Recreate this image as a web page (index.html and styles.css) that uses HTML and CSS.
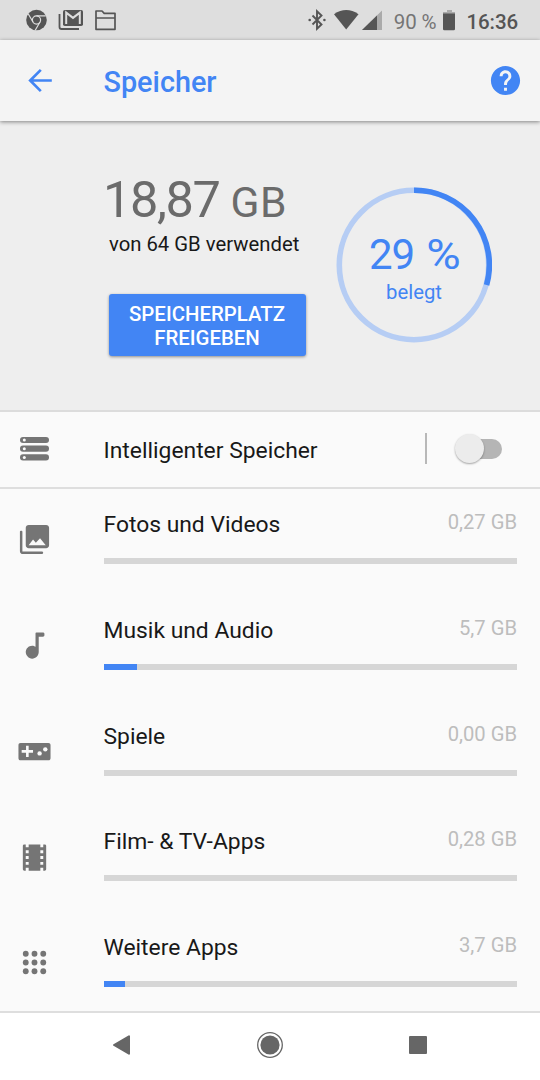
FILE: index.html
```html
<!DOCTYPE html>
<html lang="de">
<head>
<meta charset="utf-8">
<title>Speicher</title>
<link rel="stylesheet" href="styles.css">
</head>
<body>
<div class="screen">
  <div class="status">
    <svg class="status-icons" width="540" height="40" viewBox="0 0 540 40">
      <circle cx="36.500" cy="20" r="10.300" fill="#555"/>
      <g fill="none" stroke="#dedede" stroke-width="1.200"><circle cx="36.500" cy="20" r="4.100"/><path d="M36.500 15.900h9.300M33 22l-4.700-8M40 22l-4.800 8.300"/></g>
      <path d="M59.500 14v13q0 2 2 2h17.500" fill="none" stroke="#555" stroke-width="1.800"/>
      <rect x="63" y="10" width="20" height="16" rx="1.800" fill="#555"/>
      <path d="M66.200 24V12.600l6.800 5.300 6.800-5.300V24" fill="none" stroke="#dedede" stroke-width="2"/>
      <path d="M96 11h6l2.200 2.300H115V29.300H96zM96 18h19" fill="none" stroke="#555" stroke-width="1.700" stroke-linejoin="round"/>
      <path d="M312.500 15.500l9 9-4.500 4.300V11.200l4.500 4.300-9 9" fill="none" stroke="#555" stroke-width="1.900"/>
      <circle cx="309.700" cy="20" r="1.300" fill="#555"/><circle cx="324.400" cy="20" r="1.300" fill="#555"/>
      <path d="M334 14.200Q346.200 5.800 358.500 14.200L346.200 29.500z" fill="#555"/>
      <path d="M382 10.500V30H362z" fill="#aaa"/><path d="M377 15.400V30h-15z" fill="#555"/>
      <path d="M447 10h5v2h3v3h-12v-3h4z" fill="#aaa"/><path d="M443 13.500h12V29q0 1.300-1.300 1.300h-9.400Q443 30.300 443 29z" fill="#555"/>
    </svg>
    <span class="battery">90 %</span>
    <span class="clock">16:36</span>
  </div>
  <header class="bar">
    <svg class="back" width="35" height="35" viewBox="0 0 35 35"><path d="M29.800 17.500H8M18.800 6.900L8.200 17.500l10.600 10.600" fill="none" stroke="#4285f4" stroke-width="2.700"/></svg>
    <h1 class="title">Speicher</h1>
    <svg class="help" width="35" height="35" viewBox="0 0 24 24"><path fill="#4285f4" d="M12 2C6.480 2 2 6.480 2 12s4.480 10 10 10 10-4.480 10-10S17.520 2 12 2zm1 17h-2v-2h2v2zm2.070-7.750l-.9.920C13.450 12.900 13 13.500 13 15h-2v-.5c0-1.100.45-2.100 1.170-2.830l1.240-1.260c.37-.36.59-.86.59-1.410 0-1.100-.9-2-2-2s-2 .9-2 2H8c0-2.210 1.790-4 4-4s4 1.790 4 4c0 .88-.36 1.680-.93 2.250z"/></svg>
  </header>
  <section class="summary">
    <div class="usage">
      <div class="amount"><span class="number">18,87</span><span class="unit">GB</span></div>
      <div class="total">von 64 GB verwendet</div>
      <button class="free">SPEICHERPLATZ<br>FREIGEBEN</button>
    </div>
    <div class="donut">
      <svg class="ring" width="156" height="156" viewBox="0 0 156 156" fill="none" stroke-width="5.600">
        <circle cx="78" cy="78" r="74.700" stroke="#b6cdf4"/>
        <path d="M78 3.300A74.700 74.700 0 0 1 150.600 98.100" stroke="#4285f4"/>
      </svg>
      <div class="percent"><span class="percent-number">29</span><span class="percent-sign">%</span></div>
      <div class="used">belegt</div>
    </div>
  </section>
  <section class="smart">
    <svg class="icon" width="35" height="35" viewBox="0 0 35 35"><g fill="#757575"><rect x="3" y="5.900" width="29" height="6.200" rx="3"/><rect x="3" y="14.600" width="29" height="6.200" rx="3"/><rect x="3" y="23.300" width="29" height="6.200" rx="3"/></g><g fill="#fafafa"><circle cx="7.300" cy="9" r="1.500"/><circle cx="7.300" cy="17.700" r="1.500"/><circle cx="7.300" cy="26.400" r="1.500"/></g></svg>
    <span class="smart-label">Intelligenter Speicher</span>
    <span class="divider"></span>
    <span class="switch"><span class="thumb"></span></span>
  </section>
  <main class="list">
    <div class="row">
      <svg class="icon" width="35" height="35" viewBox="0 0 24 24"><path fill="#757575" d="M22 16V4c0-1.100-.9-2-2-2H8c-1.100 0-2 .9-2 2v12c0 1.100.9 2 2 2h12c1.100 0 2-.9 2-2zM8 16l3-4 1.900 2.300L15.800 11.100l3.900 4.900zM2 6.600V20c0 1.100.9 2 2 2h13.300c.9 0 .9-1.700 0-1.700H3.700V6.600c0-.9-1.700-.9-1.700 0z"/></svg>
      <div class="body"><div class="line"><span class="name">Fotos und Videos</span><span class="size">0,27 GB</span></div><div class="track"></div></div>
    </div>
    <div class="row">
      <svg class="icon" width="35" height="35" viewBox="0 0 24 24"><path fill="#757575" d="M12.700 3.600v9.300C12 12.500 11.300 12.100 10.400 12.100c-2.500 0-4.400 2-4.400 4.400S8 21 10.400 21s4.500-2 4.500-4.500V6h2.900c.6 0 1-.4 1-1V4c0-.6-.4-1-1-1h-4.500c-.4 0-.6.3-.6.6z"/></svg>
      <div class="body"><div class="line"><span class="name">Musik und Audio</span><span class="size">5,7 GB</span></div><div class="track"><div class="fill" style="width:8.1%"></div></div></div>
    </div>
    <div class="row">
      <svg class="icon" width="35" height="35" viewBox="0 0 24 24"><path fill="#757575" d="M21.500 6.100h-19C1.500 6.100 1 6.700 1 7.700v8.700c0 1 .5 1.600 1.500 1.600h19c1 0 1.500-.6 1.500-1.600V7.700c0-1-.5-1.600-1.500-1.600zM11 12.800H8V15.800H6.200v-3H3.200V11h3V8H8v3h3z"/><g fill="#fafafa"><circle cx="15.500" cy="13.300" r="1.500"/><circle cx="19.400" cy="10.500" r="1.500"/></g></svg>
      <div class="body"><div class="line"><span class="name">Spiele</span><span class="size">0,00 GB</span></div><div class="track"></div></div>
    </div>
    <div class="row">
      <svg class="icon" width="35" height="35" viewBox="0 0 24 24"><path fill="#757575" d="M18 3v2h-2V3H8v2H6V3H5q-1 0-1 1v16q0 1 1 1h1v-2h2v2h8v-2h2v2h1q1 0 1-1V4q0-1-1-1zM8 17H6v-2h2v2zm0-4H6v-2h2v2zm0-4H6V7h2v2zm10 8h-2v-2h2v2zm0-4h-2v-2h2v2zm0-4h-2V7h2v2z"/></svg>
      <div class="body"><div class="line"><span class="name">Film- &amp; TV-Apps</span><span class="size">0,28 GB</span></div><div class="track"></div></div>
    </div>
    <div class="row">
      <svg class="icon" width="35" height="35" viewBox="0 0 24 24"><g fill="#757575"><circle cx="6" cy="6" r="2"/><circle cx="12" cy="6" r="2"/><circle cx="18" cy="6" r="2"/><circle cx="6" cy="12" r="2"/><circle cx="12" cy="12" r="2"/><circle cx="18" cy="12" r="2"/><circle cx="6" cy="18" r="2"/><circle cx="12" cy="18" r="2"/><circle cx="18" cy="18" r="2"/></g></svg>
      <div class="body"><div class="line"><span class="name">Weitere Apps</span><span class="size">3,7 GB</span></div><div class="track"><div class="fill" style="width:5.2%"></div></div></div>
    </div>
  </main>
  <nav class="nav">
    <svg width="30" height="30" viewBox="0 0 30 30"><path d="M7 15L22 6.300v17.400z" fill="#666" stroke="#666" stroke-width="2" stroke-linejoin="round"/></svg>
    <svg width="30" height="30" viewBox="0 0 30 30"><circle cx="15" cy="15" r="12.300" fill="none" stroke="#666" stroke-width="1.300"/><circle cx="15" cy="15" r="9.600" fill="#666"/></svg>
    <svg width="30" height="30" viewBox="0 0 30 30"><rect x="6" y="6" width="18" height="18" rx="1" fill="#666"/></svg>
  </nav>
</div>
</body>
</html>
```
FILE: styles.css
```css
* { box-sizing: border-box; }
body { margin: 0; font-family: Roboto, "Liberation Sans", sans-serif; color: #181818; }
.screen { width: 540px; height: 1080px; display: flex; flex-direction: column; background: #fafafa; overflow: hidden; }
.status { height: 40px; background: #dedede; position: relative; display: flex; justify-content: flex-end; align-items: center; padding: 3px 22px 0 0; gap: 30px; font-size: 20.5px; line-height: 24px; flex: none; }
.status-icons { position: absolute; left: 0; top: 0; }
.battery { color: #757575; letter-spacing: -.1px; }
.clock { color: #555; font-weight: 500; letter-spacing: -.1px; }
.bar { height: 81px; flex: none; display: flex; align-items: center; padding: 0 17px 0 22px; background: #f4f4f4; box-shadow: 0 1px 4px rgba(0,0,0,.45); z-index: 1; }
.title { flex: 1; margin: 2px 0 0 46.5px; font-size: 28.800px; line-height: 34px; font-weight: 500; color: #4285f4; }
.summary { height: 291px; flex: none; background: #eee; border-bottom: 2px solid #dcdcdc; display: flex; padding: 49px 48px 0 103px; justify-content: space-between; }
.amount { display: flex; align-items: baseline; color: #6b6b6b; height: 59px; line-height: 59px; }
.number { font-size: 50.500px; letter-spacing: -1.4px; }
.unit { font-size: 42.500px; margin-left: 11px; letter-spacing: .5px; }
.total { margin: 2px 0 0 6px; font-size: 20.3px; line-height: 26px; }
.free { display: block; margin: 37px 0 0 5.5px; width: 197px; height: 62px; padding: 2px 0 0; border: 0; border-radius: 3px; background: #4285f4; color: #fff; font: 500 20.4px/24px Roboto, sans-serif; box-shadow: 0 1px 3px rgba(0,0,0,.4); }
.donut { width: 156px; height: 156px; margin-top: 17px; position: relative; color: #4285f4; text-align: center; padding-top: 47px; }
.ring { position: absolute; left: 0; top: 0; }
.percent { font-size: 42px; line-height: 42px; display: flex; justify-content: center; gap: 14px; }
.percent-number { letter-spacing: -1px; }
.percent-sign { transform: scaleX(1.12); }
.used { font-size: 20.3px; line-height: 24px; margin-top: 4px; }
.smart { height: 77px; flex: none; display: flex; align-items: center; padding: 0 38px 2px 17px; border-bottom: 2px solid #dedede; }
.icon { flex: none; }
.smart-label { flex: 1; margin: 4px 0 0 51.5px; font-size: 22.850px; }
.divider { width: 2px; height: 31px; background: #b8b8b8; margin-right: 30px; }
.switch { width: 45px; height: 20px; border-radius: 10px; background: #b5b5b5; }
.thumb { display: block; width: 29px; height: 29px; margin: -4.5px 0 0 -2px; border-radius: 50%; background: #ececec; box-shadow: 0 1px 2px rgba(0,0,0,.35); }
.list { height: 522px; flex: none; overflow: hidden; }
.row { height: 105.75px; display: flex; padding: 0 23px 0 17px; }
.row .icon { margin-top: 33.3px; }
.body { flex: 1; margin-left: 51.5px; padding-top: 20px; }
.line { display: flex; justify-content: space-between; height: 49px; }
.name { font-size: 22.850px; line-height: 30px; padding-top: 1px; }
.size { font-size: 20.2px; line-height: 26px; color: #bdbdbd; }
.track { height: 6px; background: #d6d6d6; }
.fill { height: 6px; background: #4285f4; }
.nav { flex: 1; display: flex; justify-content: space-between; padding: 17.300px 107px 0; background: #fff; border-top: 2px solid #dedede; }
```
